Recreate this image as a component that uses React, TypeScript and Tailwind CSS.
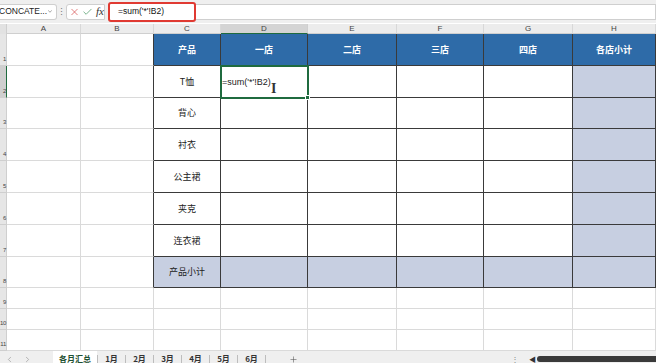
import { ChevronDown, X, Check, ChevronLeft, ChevronRight, Plus } from "lucide-react";

const cols = ["A", "B", "C", "D", "E", "F", "G", "H"];
const stores = ["一店", "二店", "三店", "四店", "各店小计"];
const products = ["T恤", "背心", "衬衣", "公主裙", "夹克", "连衣裙"];
const rowHeights = [32, 32, 31, 32, 32, 32, 32, 31, 21, 21, 21];
const tabs = ["1月", "2月", "3月", "4月", "5月", "6月"];

const font = { fontFamily: '"Noto Sans CJK SC", "Noto Sans", sans-serif' };
const latin = { fontFamily: '"Liberation Sans", sans-serif' };

function Cell({ r, c }: { r: number; c: number }) {
  // r: 1-based row, c: 0-based column (0 = A)
  const inTable = r >= 1 && r <= 8 && c >= 2;
  const darkRight = r >= 1 && r <= 8 && c >= 1;
  const darkBottom = inTable;
  const selected = r === 2 && c === 3;

  let bg = "bg-white";
  let text = "";
  let textCls = "text-[#222]";
  if (inTable) {
    if (r === 1) {
      bg = "bg-[#2e6ba8]";
      textCls = "text-white font-semibold";
      text = c === 2 ? "产品" : stores[c - 3];
    } else if (r === 8) {
      bg = "bg-[#c7cfe1]";
      if (c === 2) text = "产品小计";
    } else {
      if (c === 7) bg = "bg-[#c7cfe1]";
      if (c === 2) text = products[r - 2];
    }
  }

  return (
    <div
      className={[
        "relative flex items-center justify-center border-b border-r text-[9px]",
        bg,
        darkRight ? "border-r-[#3a3a3a]" : "border-r-[#dadada]",
        darkBottom ? "border-b-[#3a3a3a]" : "border-b-[#dadada]",
        selected ? "z-10 outline-2 outline-[#1f6b3f] -outline-offset-1 justify-start" : "",
      ].join(" ")}
    >
      {selected ? (
        <>
          <span className="pl-[1px] pt-[2px] text-[9px] text-[#222]" style={latin}>
            =sum('*'!B2)
          </span>
          <span
            className="absolute left-[50px] top-[16px] text-[14px] font-bold leading-none text-[#333]"
            style={{ fontFamily: '"Liberation Serif", serif' }}
          >
            I
          </span>
          <span className="absolute -bottom-[3px] -right-[3px] h-[5px] w-[5px] border border-white bg-[#1f6b3f]" />
        </>
      ) : (
        <span className={textCls}>{text}</span>
      )}
    </div>
  );
}

export default function App() {
  return (
    <div className="h-[363px] w-[656px] overflow-hidden bg-white" style={font}>
      {/* formula bar */}
      <div className="flex h-[23px] items-center bg-[#efefef]">
        <div className="flex h-[16px] w-[57px] items-center justify-between overflow-hidden rounded-r-[3px] border border-l-0 border-[#cfcfcf] bg-white pr-[3px]">
          <span className="-ml-[1px] text-[8.5px] text-[#222]" style={latin}>
            CONCATE...
          </span>
          <ChevronDown size={9} strokeWidth={2} className="text-[#444]" />
        </div>
        <span className="w-[9px] text-center text-[9px] leading-none text-[#777]">⋮</span>
        <div className="flex h-[16px] w-[39px] items-center gap-[2px] rounded-l-[3px] border border-[#cfcfcf] bg-white pl-[2px]">
          <X size={12} strokeWidth={1.4} className="text-[#d23b3b]" />
          <Check size={12} strokeWidth={1.4} className="text-[#2f8a4c]" />
          <span className="ml-[1px] text-[11px] italic leading-none text-[#333]" style={{ fontFamily: '"Liberation Serif", serif' }}>
            fx
          </span>
        </div>
        <div className="ml-[3px] flex h-[16px] flex-1 items-center border border-[#cfcfcf] bg-white">
          <div className="-ml-[1px] flex h-[20px] w-[88px] items-center rounded-[3px] border-2 border-[#e03a32] bg-white pl-[8px]">
            <span className="text-[8.5px] text-[#111]" style={latin}>
              =sum('*'!B2)
            </span>
          </div>
        </div>
      </div>

      {/* column headers */}
      <div
        className="mt-[1px] grid h-[10px] grid-cols-[7px_74px_73px_67px_87px_89px_87px_89px_1fr] bg-[#ececec] text-[8px] leading-none text-[#444]"
        style={latin}
      >
        <div className="border-r border-[#cfcfcf] bg-[#e2e2e2]" />
        {cols.map((c) => (
          <div
            key={c}
            className={
              "flex items-center justify-center border-r border-b " +
              (c === "D" ? "border-b-[#1f6b3f] border-r-[#cfcfcf] bg-[#d4d4d4]" : "border-b-[#cfcfcf] border-r-[#d8d8d8]")
            }
          >
            {c}
          </div>
        ))}
      </div>

      {/* grid */}
      <div className="grid grid-cols-[7px_74px_73px_67px_87px_89px_87px_89px_1fr]">
        {rowHeights.map((h, i) => {
          const r = i + 1;
          return (
            <div key={r} className="contents">
              <div
                className={
                  "flex items-end justify-end border-b border-r pb-[3px] text-[6px] leading-none tracking-tighter text-[#444] " +
                  (r === 2 ? "border-b-[#cfcfcf] border-r-[#1f6b3f] bg-[#cfcfcf]" : "border-[#cfcfcf] bg-[#e6e6e6]")
                }
                style={{ height: h, ...latin }}
              >
                <span className="whitespace-nowrap">{r}</span>
              </div>
              {cols.map((_, c) => (
                <Cell key={c} r={r} c={c} />
              ))}
            </div>
          );
        })}
      </div>

      {/* sheet tabs */}
      <div className="flex h-[16px] items-center bg-[#efefef] text-[8px] text-[#333]">
        <ChevronLeft size={9} strokeWidth={1.5} className="ml-[5px] text-[#888]" />
        <ChevronRight size={9} strokeWidth={1.5} className="ml-[9px] text-[#888]" />
        <div className="ml-[21px] flex h-full w-[44px] items-center justify-center bg-white">
          <span className="border-b-2 border-[#1f6b3f] font-semibold leading-[11px] text-[#1f5132]">各月汇总</span>
        </div>
        {tabs.map((t) => (
          <div key={t} className="flex items-center">
            <span className="h-[9px] w-px bg-[#bdbdbd]" />
            <span className="w-[27px] text-center font-semibold">{t}</span>
          </div>
        ))}
        <span className="h-[9px] w-px bg-[#bdbdbd]" />
        <Plus size={9} strokeWidth={1.5} className="ml-[23px] text-[#555]" />
        <span className="ml-[213px] text-[8px] leading-none text-[#888]">⋮</span>
        <span className="ml-[10px] text-[7px] leading-none text-[#333]">◀</span>
        <div className="ml-[1px] h-[6px] flex-1 rounded-l-full bg-[#3a3a3a]" />
      </div>
    </div>
  );
}
